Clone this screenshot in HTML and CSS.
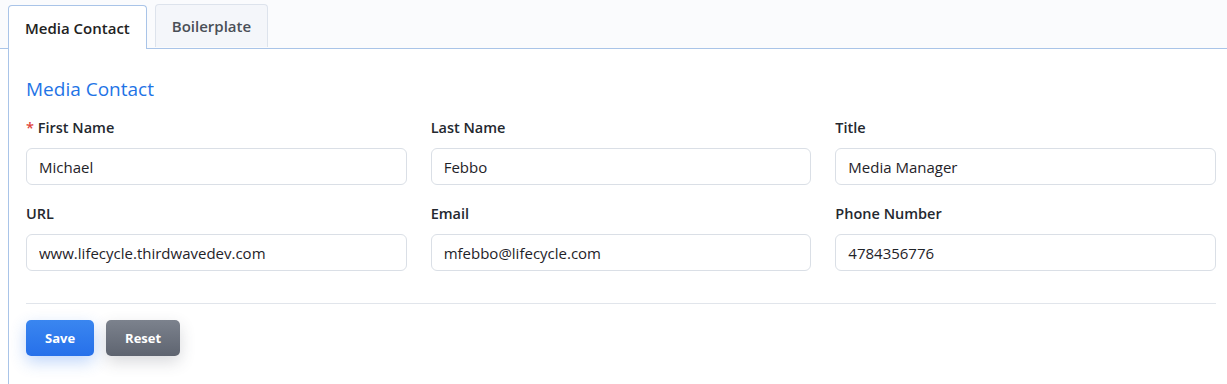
FILE: index.html
```html
<!DOCTYPE html>
<html lang="en">
<head>
    <meta charset="UTF-8">
    <meta name="viewport" content="width=device-width, initial-scale=1.0">
    <title>Media Contact</title>
    <link rel="stylesheet" href="styles.css">
</head>
<body>
    <div class="tabs">
        <div class="tab active">Media Contact</div>
        <div class="tab">Boilerplate</div>
    </div>
    <div class="panel">
        <h2>Media Contact</h2>
        <div class="form-grid">
            <div class="field">
                <label><span class="req">*</span> First Name</label>
                <input type="text" value="Michael">
            </div>
            <div class="field">
                <label>Last Name</label>
                <input type="text" value="Febbo">
            </div>
            <div class="field">
                <label>Title</label>
                <input type="text" value="Media Manager">
            </div>
            <div class="field">
                <label>URL</label>
                <input type="text" value="www.lifecycle.thirdwavedev.com">
            </div>
            <div class="field">
                <label>Email</label>
                <input type="text" value="mfebbo@lifecycle.com">
            </div>
            <div class="field">
                <label>Phone Number</label>
                <input type="text" value="4784356776">
            </div>
        </div>
        <hr class="divider">
        <div class="actions">
            <button class="btn btn-save">Save</button>
            <button class="btn btn-reset">Reset</button>
        </div>
    </div>
</body>
</html>
```

FILE: styles.css
```css
* {
    box-sizing: border-box;
}

body {
    margin: 0;
    font-family: "Open Sans", "Noto Sans", Arial, sans-serif;
    background-color: #fff;
    color: #212529;
}

.tabs {
    display: flex;
    align-items: flex-end;
    gap: 8px;
    padding: 5px 0 0 8px;
    background-color: #fafbfd;
    border-bottom: 1px solid #a9c4e8;
    height: 49px;
}

.tab {
    height: 43px;
    padding: 0 16px;
    display: flex;
    align-items: center;
    font-size: 15px;
    font-weight: 600;
    color: #4a4f57;
    background-color: #f4f6fa;
    border: 1px solid #dde3ec;
    border-bottom: none;
    border-radius: 4px 4px 0 0;
    margin-bottom: 1px;
}

.tab.active {
    height: 44px;
    margin-bottom: -1px;
    color: #222;
    background-color: #fff;
    border-color: #a9c4e8;
}

.panel {
    margin-left: 8px;
    border-left: 1px solid #a9c4e8;
    padding: 27px 11px 28px 17px;
}

h2 {
    margin: 0 0 16px;
    font-size: 19px;
    font-weight: 400;
    color: #1f74e6;
    line-height: 26px;
}

.form-grid {
    display: grid;
    grid-template-columns: repeat(3, 1fr);
    column-gap: 24px;
    row-gap: 19px;
}

.field label {
    display: block;
    font-size: 14.5px;
    font-weight: 600;
    color: #24282f;
    line-height: 20px;
    margin-bottom: 10px;
}

.req {
    color: #e0443a;
}

.field input {
    width: 100%;
    height: 37px;
    padding: 0 12px;
    font-family: inherit;
    font-size: 15px;
    color: #1f2329;
    border: 1px solid #dadfe6;
    border-radius: 6px;
    outline: none;
}

.divider {
    border: none;
    border-top: 1px solid #e1e5eb;
    margin: 32px 0 16px;
}

.actions {
    display: flex;
    gap: 12px;
}

.btn {
    height: 36px;
    padding: 0 19px;
    font-family: inherit;
    font-size: 13px;
    font-weight: 700;
    color: #fff;
    border: none;
    border-radius: 5px;
}

.btn-save {
    background: linear-gradient(#3a86f0, #2670ea);
    box-shadow: 0 6px 16px rgba(47, 120, 240, 0.3);
}

.btn-reset {
    background: linear-gradient(#7c828d, #5e6470);
    box-shadow: 0 6px 16px rgba(60, 66, 80, 0.2);
}
```
